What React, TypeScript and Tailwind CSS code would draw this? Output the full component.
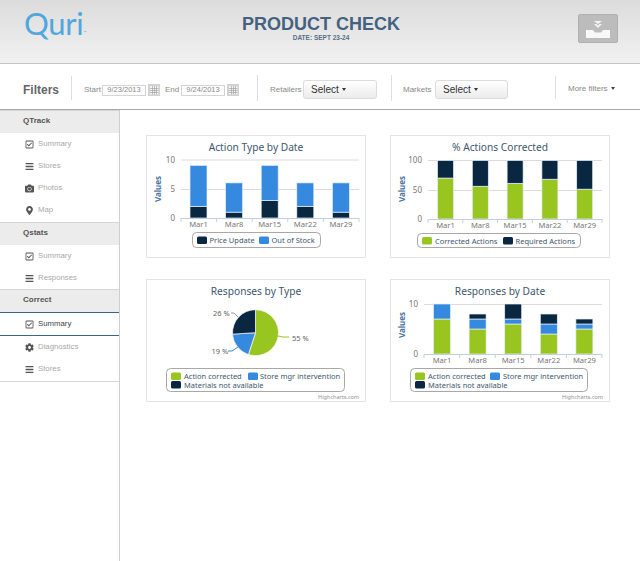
import React from 'react';
import { FaRegCheckSquare, FaBars, FaCamera, FaMapMarkerAlt, FaCog } from 'react-icons/fa';

const NAVY = '#0a2742';
const BLUE = '#3589de';
const GREEN = '#98c520';
const DAYS = ['Mar1', 'Mar8', 'Mar15', 'Mar22', 'Mar29'];
const FONT = '"Noto Sans", "DejaVu Sans", sans-serif';

type Legend = {
  box: [number, number, number, number];
  items: { x: number; tx: number; y: number; color: string; label: string }[];
};

function ChartCard({ children }: { children: React.ReactNode }) {
  return (
    <div className="w-[220px] h-[123px] border border-[#e4e4e4] bg-white">
      <svg width="218" height="121" viewBox="1 1 218 121" className="block" style={{ fontFamily: FONT }}>
        {children}
      </svg>
    </div>
  );
}

function ChartTitle({ text, y = 16 }: { text: string; y?: number }) {
  return (
    <text x="110" y={y} textAnchor="middle" fontSize="10.2" fill="#3e576f">
      {text}
    </text>
  );
}

function ChartLegend({ box, items }: Legend) {
  return (
    <g>
      <rect x={box[0]} y={box[1]} width={box[2]} height={box[3]} rx="4" fill="#fff" stroke="#a8a8a8" />
      {items.map((it) => (
        <g key={it.label}>
          <rect x={it.x} y={it.y} width="10" height="7.5" rx="1.5" fill={it.color} />
          <text x={it.tx} y={it.y + 6.5} fontSize="7.5" fill="#3e576f">
            {it.label}
          </text>
        </g>
      ))}
    </g>
  );
}

type BarProps = {
  left: number;
  right: number;
  firstBar: number;
  barW: number;
  step: number;
  ticks: { label: string; y: number }[];
  base: number;
  scale: number;
  series: { color: string; data: number[] }[];
  labelY: number;
  valuesY: number;
};

function Bars({ left, right, firstBar, barW, step, ticks, base, scale, series, labelY, valuesY }: BarProps) {
  const tickW = (right - left) / 5;
  return (
    <g>
      {ticks.map((t) => (
        <g key={t.label}>
          {t.y !== base && <line x1={left} x2={right} y1={t.y + 0.5} y2={t.y + 0.5} stroke="#dcdcdc" />}
          <text x={left - 6} y={t.y + 3} textAnchor="end" fontSize="8" fill="#777">
            {t.label}
          </text>
        </g>
      ))}
      <text
        transform={`translate(15 ${valuesY}) rotate(-90)`}
        textAnchor="middle"
        fontSize="8"
        fontWeight="700"
        fill="#4d759e"
      >
        Values
      </text>
      {DAYS.map((d, i) => {
        let top = base;
        return (
          <g key={d}>
            {series.map((s) => {
              const h = s.data[i] * scale;
              top -= h;
              return h > 0 ? (
                <rect key={s.color} x={firstBar + step * i} y={top} width={barW} height={h} fill={s.color} stroke="#e6f0fa" strokeWidth="0.7" />
              ) : null;
            })}
            <text x={firstBar + barW / 2 + step * i} y={labelY} textAnchor="middle" fontSize="7.6" fill="#777">
              {d}
            </text>
          </g>
        );
      })}
      <line x1={left} x2={right} y1={base + 0.5} y2={base + 0.5} stroke="#c0d0e0" />
      {[0, 1, 2, 3, 4, 5].map((i) => (
        <line key={i} x1={left + tickW * i} x2={left + tickW * i} y1={base} y2={base + 4} stroke="#c0d0e0" />
      ))}
    </g>
  );
}

function Credit() {
  return (
    <text x="213" y="119.5" textAnchor="end" fontSize="5.5" fill="#909090">
      Highcharts.com
    </text>
  );
}

function slice(cx: number, cy: number, r: number, from: number, to: number) {
  const a = ((from * 3.6 - 90) * Math.PI) / 180;
  const b = ((to * 3.6 - 90) * Math.PI) / 180;
  const large = to - from > 50 ? 1 : 0;
  return `M${cx} ${cy}L${cx + r * Math.cos(a)} ${cy + r * Math.sin(a)}A${r} ${r} 0 ${large} 1 ${cx + r * Math.cos(b)} ${cy + r * Math.sin(b)}Z`;
}

function ActionType() {
  return (
    <ChartCard>
      <ChartTitle text="Action Type by Date" />
      <Bars
        left={35}
        right={213}
        firstBar={44}
        barW={17}
        step={35.6}
        base={83}
        scale={5.85}
        labelY={92}
        valuesY={54}
        ticks={[
          { label: '10', y: 24.5 },
          { label: '5', y: 54 },
          { label: '0', y: 83 },
        ]}
        series={[
          { color: NAVY, data: [2, 1, 3, 2, 1] },
          { color: BLUE, data: [7, 5, 6, 4, 5] },
        ]}
      />
      <ChartLegend
        box={[46.5, 97.5, 128, 15]}
        items={[
          { x: 51, tx: 63.5, y: 101.5, color: NAVY, label: 'Price Update' },
          { x: 113, tx: 125.5, y: 101.5, color: BLUE, label: 'Out of Stock' },
        ]}
      />
    </ChartCard>
  );
}

function ActionsCorrected() {
  return (
    <ChartCard>
      <ChartTitle text="% Actions Corrected" />
      <Bars
        left={38}
        right={212}
        firstBar={47.5}
        barW={16}
        step={34.8}
        base={84}
        scale={0.585}
        labelY={93}
        valuesY={54}
        ticks={[
          { label: '100', y: 25 },
          { label: '50', y: 55 },
          { label: '0', y: 84 },
        ]}
        series={[
          { color: GREEN, data: [70, 56, 61, 68, 51] },
          { color: NAVY, data: [30, 44, 39, 32, 49] },
        ]}
      />
      <ChartLegend
        box={[27.5, 98.5, 163, 14]}
        items={[
          { x: 32, tx: 45, y: 102, color: GREEN, label: 'Corrected Actions' },
          { x: 113, tx: 125.5, y: 102, color: NAVY, label: 'Required Actions' },
        ]}
      />
    </ChartCard>
  );
}

function ResponsesType() {
  const cx = 109.5;
  const cy = 53.7;
  const r = 23;
  return (
    <ChartCard>
      <ChartTitle text="Responses by Type" y={15.5} />
      <path d={slice(cx, cy, r, 0, 55)} fill={GREEN} stroke="#fff" strokeWidth="0.7" />
      <path d={slice(cx, cy, r, 55, 74)} fill={BLUE} stroke="#fff" strokeWidth="0.7" />
      <path d={slice(cx, cy, r, 74, 100)} fill={NAVY} stroke="#fff" strokeWidth="0.7" />
      <path d="M132 57 L137 58 L143 58" fill="none" stroke={GREEN} />
      <path d="M85 34 L88 34 L92 38" fill="none" stroke="#999" />
      <path d="M82 72 L86 72 L92 68" fill="none" stroke={BLUE} />
      <text x="146" y="62" fontSize="7.5" fill="#666">55 %</text>
      <text x="67" y="37" fontSize="7.5" fill="#666">26 %</text>
      <text x="65.5" y="75" fontSize="7.5" fill="#666">19 %</text>
      <ChartLegend
        box={[20.5, 89.5, 178, 23]}
        items={[
          { x: 25, tx: 38, y: 93.5, color: GREEN, label: 'Action corrected' },
          { x: 102, tx: 114, y: 93.5, color: BLUE, label: 'Store mgr intervention' },
          { x: 25, tx: 38, y: 102, color: NAVY, label: 'Materials not available' },
        ]}
      />
      <Credit />
    </ChartCard>
  );
}

function ResponsesDate() {
  return (
    <ChartCard>
      <ChartTitle text="Responses by Date" y={15.5} />
      <Bars
        left={34}
        right={212}
        firstBar={43.5}
        barW={17}
        step={35.6}
        base={75}
        scale={5}
        labelY={84}
        valuesY={46}
        ticks={[
          { label: '10', y: 25 },
          { label: '0', y: 75 },
        ]}
        series={[
          { color: GREEN, data: [7, 5, 6, 4, 5] },
          { color: BLUE, data: [3, 2, 1, 2, 1] },
          { color: NAVY, data: [0, 1, 3, 2, 1] },
        ]}
      />
      <ChartLegend
        box={[20.5, 89.5, 177, 23]}
        items={[
          { x: 25, tx: 38, y: 93.5, color: GREEN, label: 'Action corrected' },
          { x: 100, tx: 113, y: 93.5, color: BLUE, label: 'Store mgr intervention' },
          { x: 25, tx: 38, y: 102, color: NAVY, label: 'Materials not available' },
        ]}
      />
      <Credit />
    </ChartCard>
  );
}

function NavItem({ icon, label, active }: { icon: React.ReactNode; label: string; active?: boolean }) {
  return (
    <div className={`flex items-center h-[22px] pl-[25px] gap-[4px] text-[7.8px] ${active ? 'text-[#444]' : 'text-[#a9a9a9]'}`}>
      <span className="w-[9px] flex justify-center text-[#555] text-[9px]">{icon}</span>
      <span>{label}</span>
    </div>
  );
}

function NavHeader({ label }: { label: string }) {
  return (
    <div className="flex items-center h-[23px] pb-[2px] pl-[23px] bg-[#ececec] border-t border-[#d4d4d4] text-[8px] font-bold text-[#555]">
      {label}
    </div>
  );
}

function Sidebar() {
  return (
    <aside className="w-[120px] shrink-0 border-r border-[#cfcfcf] bg-white">
      <NavHeader label="QTrack" />
      <NavItem icon={<FaRegCheckSquare />} label="Summary" />
      <NavItem icon={<FaBars />} label="Stores" />
      <NavItem icon={<FaCamera />} label="Photos" />
      <NavItem icon={<FaMapMarkerAlt />} label="Map" />
      <div className="h-[1px]" />
      <NavHeader label="Qstats" />
      <NavItem icon={<FaRegCheckSquare />} label="Summary" />
      <NavItem icon={<FaBars />} label="Responses" />
      <NavHeader label="Correct" />
      <div className="border-y border-[#3d6485]">
        <NavItem icon={<FaRegCheckSquare />} label="Summary" active />
      </div>
      <NavItem icon={<FaCog />} label="Diagnostics" />
      <NavItem icon={<FaBars />} label="Stores" />
      <div className="mt-[1px] border-t border-[#d8d8d8]" />
    </aside>
  );
}

function CalendarIcon() {
  return (
    <svg width="12" height="12" viewBox="0 0 12 12" className="block shrink-0">
      <rect width="12" height="12" fill="#d2d2d2" />
      <rect x="2" y="2" width="8.5" height="8.5" fill="#f2f2f2" />
      <path d="M2 4.5h8.5M2 6.5h8.5M2 8.5h8.5M4.5 2v8.5M6.5 2v8.5M8.5 2v8.5" stroke="#9a9a9a" strokeWidth="0.6" />
    </svg>
  );
}

function DateField({ value }: { value: string }) {
  return (
    <div className="w-[44px] h-[11px] mt-[2px] border border-[#d4d4d4] bg-white flex items-center justify-center text-[7.5px] text-[#888]">
      {value}
    </div>
  );
}

function SelectButton({ className }: { className: string }) {
  return (
    <div className={`h-[19px] rounded-[3px] border border-[#dcdcdc] bg-gradient-to-b from-white to-[#ececec] flex items-center pl-[7px] gap-[3px] text-[10px] text-[#333] ${className}`}>
      Select
      <span className="w-0 h-0 border-x-[2.5px] border-x-transparent border-t-[3px] border-t-[#333]" />
    </div>
  );
}

function Divider({ className }: { className: string }) {
  return <div className={`w-px bg-[#dedede] shrink-0 mb-[3px] ${className}`} />;
}

export default function App() {
  return (
    <div className="w-[640px] h-[561px] flex flex-col bg-white overflow-hidden" style={{ fontFamily: '"Liberation Sans", Arial, sans-serif' }}>
      <header className="h-[64px] shrink-0 flex items-start bg-gradient-to-b from-[#dcdcdc] to-[#f1f1f1] border-b border-[#c4c4c4]">
        <div className="w-[160px] pl-[24px] pt-[5px] flex items-start text-[#4fa7dd] text-[31px] leading-[36px] tracking-[-0.3px]" style={{ fontFamily: 'Lato, sans-serif', fontWeight: 400 }}>
          Quri<span className="text-[4px] leading-[4px] mt-[26px]">™</span>
        </div>
        <div className="w-[322px] pt-[14px] text-center">
          <div className="text-[18px] leading-[20px] font-bold text-[#44627f]">PRODUCT CHECK</div>
          <div className="text-[6.5px] leading-[8px] font-bold text-[#5a6f84]">DATE: SEPT 23-24</div>
        </div>
        <div className="ml-[96px] mt-[14px] w-[40px] h-[29px] rounded-[2px] bg-[#bcbcbc] border border-[#b0b0b0] flex items-center justify-center">
          <svg width="26" height="22" viewBox="0 0 26 22" className="block">
            <path d="M9 3h8l-4 3zM9 6h2.5L13 7.5 14.5 6H17l-4 4z" fill="#f4f4f4" />
            <path d="M1 12h7l2 2.5h6L18 12h7v8H1z" fill="#f8f8f8" />
          </svg>
        </div>
      </header>

      <div className="h-[46px] shrink-0 pt-[5px] flex items-center border-b border-[#a9a9a9] text-[8px] text-[#888]">
        <span className="ml-[23px] mt-[2px] w-[48px] text-[12px] font-bold text-[#666]">Filters</span>
        <Divider className="h-[24px]" />
        <span className="ml-[12px] mt-[2px] w-[18px]">Start</span>
        <DateField value="9/23/2013" />
        <span className="ml-[2px] mt-[1px]"><CalendarIcon /></span>
        <span className="ml-[5px] mt-[2px] w-[16px]">End</span>
        <DateField value="9/24/2013" />
        <span className="ml-[2px] mt-[1px]"><CalendarIcon /></span>
        <Divider className="ml-[18px] h-[26px]" />
        <span className="ml-[12px] mt-[2px] w-[33px]">Retailers</span>
        <SelectButton className="w-[74px]" />
        <Divider className="ml-[14px] h-[26px]" />
        <span className="ml-[11px] mt-[2px] w-[32px]">Markets</span>
        <SelectButton className="w-[73px]" />
        <Divider className="ml-[47px] h-[23px]" />
        <span className="ml-[12px] mb-[1px]">More filters</span>
        <span className="ml-[3px] mb-[1px] w-0 h-0 border-x-[2.5px] border-x-transparent border-t-[3px] border-t-[#444]" />
      </div>

      <div className="flex flex-1 min-h-0">
        <Sidebar />
        <main className="pl-[26px] pt-[25px] grid grid-cols-[220px_220px] auto-rows-[123px] gap-x-[24px] gap-y-[21px] content-start">
          <ActionType />
          <ActionsCorrected />
          <ResponsesType />
          <ResponsesDate />
        </main>
      </div>
    </div>
  );
}
